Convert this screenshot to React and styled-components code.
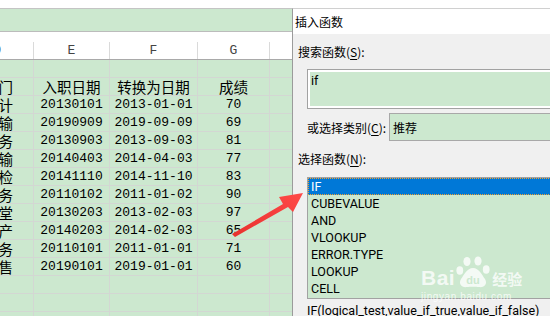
import React from 'react';
import styled, { createGlobalStyle } from 'styled-components';

const GlobalStyle = createGlobalStyle`
  *, *::before, *::after {
    box-sizing: border-box;
  }
  html, body {
    margin: 0;
    padding: 0;
    background: #fff;
    overflow: hidden;
  }
`;

const GREEN = '#cce8cf';
const GRID = '#d3d7d3';
const CJK = '"Noto Sans CJK SC", "Noto Sans", sans-serif';
const UI = 'Roboto, "Noto Sans CJK SC", sans-serif';

const Page = styled.div`
  position: relative;
  width: 550px;
  height: 316px;
  overflow: hidden;
  background: #fff;
`;

const Sheet = styled.div`
  display: flex;
  flex-direction: column;
`;

const FormulaStrip = styled.div`
  height: 9px;
  border-bottom: 1px solid #c4c4c4;
`;

const GreenBand = styled.div`
  height: 23px;
  background: ${GREEN};
  border-bottom: 1px solid #bcbcbc;
`;

const HeaderGap = styled.div`
  height: 10px;
`;

const Row = styled.div`
  display: grid;
  grid-template-columns: 34px 76px 88px 72px 1fr;
  height: 18px;
  background: ${(p) => (p.$head ? '#fff' : GREEN)};
  border-bottom: 1px solid ${(p) => (p.$head ? '#a9a9a9' : GRID)};
`;

const Cell = styled.div`
  display: flex;
  align-items: center;
  justify-content: ${(p) => (p.$cut ? 'flex-end' : 'center')};
  padding-right: ${(p) => (p.$cut ? '20px' : '0')};
  overflow: hidden;
  white-space: nowrap;
  border-right: 1px solid ${(p) => (p.$head ? '#dadada' : GRID)};
  font-family: ${(p) => (p.$mono ? '"Liberation Mono", monospace' : CJK)};
  font-size: ${(p) => (p.$mono ? '13px' : '14.5px')};
  color: #000;
  line-height: 17px;
`;

const ColLetter = styled(Cell)`
  font-family: "Liberation Mono", monospace;
  font-size: 13px;
  color: #444;
  padding-right: ${(p) => (p.$cut ? '32px' : '0')};
`;

const Dialog = styled.div`
  position: absolute;
  left: 292px;
  top: 8px;
  width: 280px;
  height: 320px;
  border-left: 1px solid #9b9b9b;
  border-top: 1px solid #d0d0d0;
  background: #f0f0f0;
  display: flex;
  flex-direction: column;
  font-family: ${CJK};
  font-size: 12px;
  color: #000;
`;

const TitleBar = styled.div`
  height: 25px;
  flex-shrink: 0;
  background: #fff;
  display: flex;
  align-items: center;
  padding-left: 2px;
  font-size: 12px;
`;

const Label = styled.div`
  line-height: 16px;
  height: 16px;
  flex-shrink: 0;
  margin-top: ${(p) => p.$top}px;
  padding-left: ${(p) => (p.$indent ? 14 : 5)}px;
  white-space: nowrap;
  u { text-decoration: underline; text-underline-offset: 2px; }
`;

const SearchBox = styled.div`
  margin: 9px 0 0 14px;
  height: 40px;
  flex-shrink: 0;
  border: 1px solid #a2a2a2;
  background: ${GREEN};
  box-shadow: inset 0 0 0 2px #fff;
  padding: 4px 0 0 3px;
  font-family: ${UI};
  font-size: 12.5px;
  line-height: 14px;
`;

const CategoryRow = styled.div`
  display: flex;
  align-items: center;
  flex-shrink: 0;
  margin: 4px 0 0 14px;
  height: 28px;
`;

const CategoryLabel = styled.div`
  width: 82px;
  white-space: nowrap;
  u { text-decoration: underline; text-underline-offset: 2px; }
`;

const Select = styled.div`
  flex: 1;
  height: 28px;
  border: 1px solid #a8a8a8;
  background: ${GREEN};
  display: flex;
  align-items: center;
  padding-left: 3px;
`;

const ListBox = styled.div`
  margin: 10px 0 0 14px;
  height: 122px;
  flex-shrink: 0;
  border: 1px solid #a2a2a2;
  background: ${GREEN};
  display: flex;
  flex-direction: column;
`;

const ListItem = styled.div`
  height: 17px;
  flex-shrink: 0;
  line-height: 17px;
  padding-left: 3px;
  font-family: ${UI};
  font-size: 12.5px;
  color: ${(p) => (p.$active ? '#fff' : '#000')};
  background: ${(p) => (p.$active ? '#0078d7' : 'transparent')};
  outline: ${(p) => (p.$active ? '1px dotted #f0a030' : 'none')};
  outline-offset: -1px;
`;

const Description = styled.div`
  margin: 4px 0 0 14px;
  font-family: ${UI};
  font-size: 12.5px;
  line-height: 16px;
  white-space: nowrap;
`;

const Overlay = styled.svg`
  position: absolute;
  left: 0;
  top: 0;
  pointer-events: none;
`;

const Watermark = styled.div`
  position: absolute;
  left: 421px;
  top: 256px;
  display: flex;
  flex-direction: column;
  color: rgba(255, 255, 255, 0.78);
  pointer-events: none;
`;

const MarkLine = styled.div`
  display: flex;
  align-items: flex-end;
  gap: 1px;
`;

const MarkBai = styled.span`
  font-family: "Liberation Sans", sans-serif;
  font-weight: bold;
  font-size: 21px;
  line-height: 20px;
  letter-spacing: 0.5px;
`;

const MarkJing = styled.span`
  font-family: ${CJK};
  font-weight: bold;
  font-size: 15px;
  line-height: 18px;
  margin-left: 1px;
`;

const MarkUrl = styled.span`
  font-family: "Liberation Sans", sans-serif;
  font-size: 10px;
  line-height: 12px;
  margin-top: 3px;
  letter-spacing: 0.6px;
`;

const rows = [
  ['部门', '入职日期', '转换为日期', '成绩'],
  ['会计', '20130101', '2013-01-01', '70'],
  ['运输', '20190909', '2019-09-09', '69'],
  ['财务', '20130903', '2013-09-03', '81'],
  ['运输', '20140403', '2014-04-03', '77'],
  ['质检', '20141110', '2014-11-10', '83'],
  ['财务', '20110102', '2011-01-02', '90'],
  ['食堂', '20130203', '2013-02-03', '97'],
  ['生产', '20140203', '2014-02-03', '65'],
  ['财务', '20110101', '2011-01-01', '71'],
  ['销售', '20190101', '2019-01-01', '60'],
];

const functions = ['IF', 'CUBEVALUE', 'AND', 'VLOOKUP', 'ERROR.TYPE', 'LOOKUP', 'CELL'];

function Paw() {
  return (
    <svg width="34" height="32" viewBox="0 0 34 32">
      <ellipse cx="11" cy="5.5" rx="3.6" ry="4.6" fill="rgba(255,255,255,0.78)" />
      <ellipse cx="22" cy="5" rx="3.6" ry="4.6" fill="rgba(255,255,255,0.78)" />
      <ellipse cx="3.8" cy="14.5" rx="3.4" ry="4.2" fill="rgba(255,255,255,0.78)" />
      <ellipse cx="30.2" cy="13.5" rx="3.4" ry="4.2" fill="rgba(255,255,255,0.78)" />
      <path d="M17 12 C11 12 8 19 5 23 C2 28 6 32 11 31 C14 30.5 20 30.5 23 31 C28 32 32 28 29 23 C26 19 23 12 17 12 Z" fill="rgba(255,255,255,0.78)" />
      <text x="17" y="28" textAnchor="middle" fontFamily="Liberation Sans, sans-serif" fontWeight="bold" fontSize="11" fill={GREEN}>du</text>
    </svg>
  );
}

function App() {
  return (
    <Page>
      <GlobalStyle />
      <Sheet>
        <FormulaStrip />
        <GreenBand />
        <HeaderGap />
        <Row $head>
          <ColLetter $head $cut>D</ColLetter>
          <ColLetter $head>E</ColLetter>
          <ColLetter $head>F</ColLetter>
          <ColLetter $head>G</ColLetter>
          <ColLetter $head />
        </Row>
        <Row>
          <Cell /><Cell /><Cell /><Cell /><Cell />
        </Row>
        {rows.map((r, i) => (
          <Row key={i}>
            <Cell $cut>{r[0]}</Cell>
            <Cell $mono={i > 0}>{r[1]}</Cell>
            <Cell $mono={i > 0}>{r[2]}</Cell>
            <Cell $mono={i > 0}>{r[3]}</Cell>
            <Cell />
          </Row>
        ))}
        {[0, 1, 2].map((i) => (
          <Row key={'e' + i}>
            <Cell /><Cell /><Cell /><Cell /><Cell />
          </Row>
        ))}
      </Sheet>

      <Dialog>
        <TitleBar>插入函数</TitleBar>
        <Label $top={10}>搜索函数(<u>S</u>):</Label>
        <SearchBox>if</SearchBox>
        <CategoryRow>
          <CategoryLabel>或选择类别(<u>C</u>):</CategoryLabel>
          <Select>推荐</Select>
        </CategoryRow>
        <Label $top={10}>选择函数(<u>N</u>):</Label>
        <ListBox>
          {functions.map((f, i) => (
            <ListItem key={f} $active={i === 0}>{f}</ListItem>
          ))}
        </ListBox>
        <Description>IF(logical_test,value_if_true,value_if_false)</Description>
      </Dialog>

      <Watermark>
        <MarkLine>
          <MarkBai>Bai</MarkBai>
          <Paw />
          <MarkJing>经验</MarkJing>
        </MarkLine>
        <MarkUrl>jingyan.baidu.com</MarkUrl>
      </Watermark>

      <Overlay width="550" height="316" viewBox="0 0 550 316">
        <defs>
          <linearGradient id="arrowFill" x1="0" y1="1" x2="1" y2="0">
            <stop offset="0" stopColor="#e8302e" />
            <stop offset="1" stopColor="#ff4a48" />
          </linearGradient>
        </defs>
        <polygon
          points="232,234 283,204 279,197 303,193 293,212 288,207 235,237"
          fill="url(#arrowFill)"
        />
      </Overlay>
    </Page>
  );
}

export default App;
